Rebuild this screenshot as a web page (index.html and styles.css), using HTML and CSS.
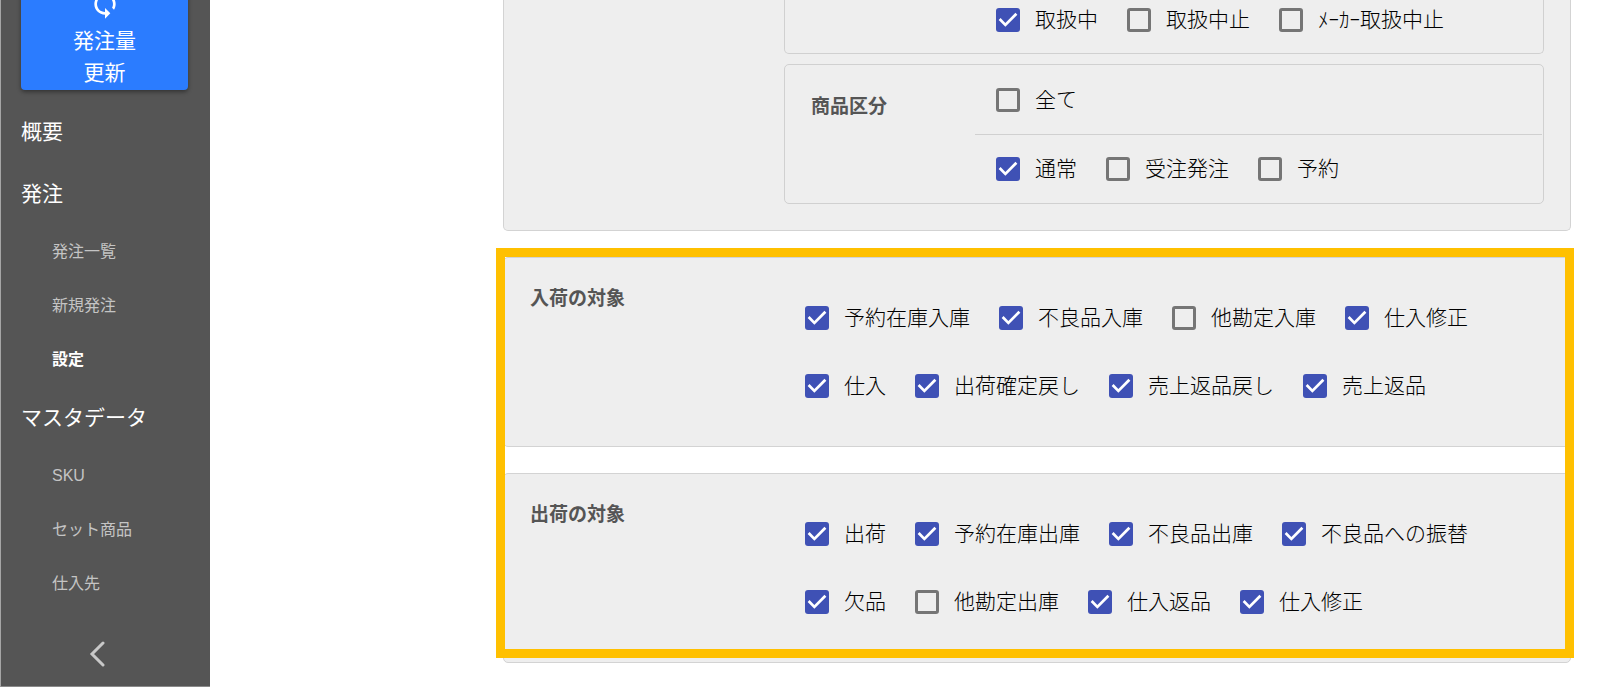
FILE: index.html
```html
<!DOCTYPE html>
<html lang="ja">
<head>
<meta charset="utf-8">
<meta name="viewport" content="width=device-width, initial-scale=1">
<title>発注設定</title>
<link rel="stylesheet" href="styles.css">
</head>
<body>
<div class="page">
  <aside class="sidebar">
    <button class="update" type="button">
      <svg class="update-icon" viewBox="0 0 24 24" aria-hidden="true"><path d="M12 4V1L8 5l4 4V6c3.31 0 6 2.69 6 6 0 1.01-.25 1.97-.7 2.8l1.46 1.46C19.54 15.03 20 13.57 20 12c0-4.42-3.58-8-8-8zm0 14c-3.31 0-6-2.69-6-6 0-1.01.25-1.97.7-2.8L5.24 7.74C4.46 8.97 4 10.43 4 12c0 4.42 3.58 8 8 8v3l4-4-4-4v3z"/></svg>
      <span>発注量</span>
      <span>更新</span>
    </button>
    <nav class="nav">
      <a class="nav-main" href="#">概要</a>
      <a class="nav-main" href="#">発注</a>
      <a class="nav-sub" href="#">発注一覧</a>
      <a class="nav-sub" href="#">新規発注</a>
      <a class="nav-sub nav-current" href="#" aria-current="page">設定</a>
      <a class="nav-main" href="#">マスタデータ</a>
      <a class="nav-sub" href="#">SKU</a>
      <a class="nav-sub" href="#">セット商品</a>
      <a class="nav-sub" href="#">仕入先</a>
    </nav>
    <button class="collapse" type="button" aria-label="メニューを閉じる">
      <svg class="collapse-icon" viewBox="0 0 16 26" aria-hidden="true"><path d="M14 2 3 13l11 11"/></svg>
    </button>
  </aside>

  <main class="main">
    <section class="card card-first">
      <div class="filters">
        <fieldset class="filter filter-cut">
          <div class="filter-rows">
            <div class="options filter-row">
              <label class="option"><input type="checkbox" checked>取扱中</label>
              <label class="option"><input type="checkbox">取扱中止</label>
              <label class="option"><input type="checkbox">ﾒｰｶｰ取扱中止</label>
            </div>
          </div>
        </fieldset>
        <fieldset class="filter" aria-labelledby="kubun">
          <h3 class="label filter-label" id="kubun">商品区分</h3>
          <div class="filter-rows">
            <div class="options filter-row">
              <label class="option"><input type="checkbox">全て</label>
            </div>
            <div class="options filter-row">
              <label class="option"><input type="checkbox" checked>通常</label>
              <label class="option"><input type="checkbox">受注発注</label>
              <label class="option"><input type="checkbox">予約</label>
            </div>
          </div>
        </fieldset>
      </div>
    </section>

    <div class="marked">
      <section class="card target">
        <h3 class="label target-label">入荷の対象</h3>
        <div class="options target-options">
          <label class="option"><input type="checkbox" checked>予約在庫入庫</label>
          <label class="option"><input type="checkbox" checked>不良品入庫</label>
          <label class="option"><input type="checkbox">他勘定入庫</label>
          <label class="option"><input type="checkbox" checked>仕入修正</label>
          <label class="option"><input type="checkbox" checked>仕入</label>
          <label class="option"><input type="checkbox" checked>出荷確定戻し</label>
          <label class="option"><input type="checkbox" checked>売上返品戻し</label>
          <label class="option"><input type="checkbox" checked>売上返品</label>
        </div>
      </section>
      <section class="card target">
        <h3 class="label target-label">出荷の対象</h3>
        <div class="options target-options">
          <label class="option"><input type="checkbox" checked>出荷</label>
          <label class="option"><input type="checkbox" checked>予約在庫出庫</label>
          <label class="option"><input type="checkbox" checked>不良品出庫</label>
          <label class="option"><input type="checkbox" checked>不良品への振替</label>
          <label class="option"><input type="checkbox" checked>欠品</label>
          <label class="option"><input type="checkbox">他勘定出庫</label>
          <label class="option"><input type="checkbox" checked>仕入返品</label>
          <label class="option"><input type="checkbox" checked>仕入修正</label>
        </div>
      </section>
    </div>
  </main>
</div>
</body>
</html>
```

FILE: styles.css
```css
* {
  box-sizing: border-box;
}

body {
  margin: 0;
  background: #fff;
  color: #000;
  font-family: "Liberation Sans", "Noto Sans CJK JP", sans-serif;
  font-size: 21px;
}

.page {
  display: flex;
  min-height: 100vh;
  overflow: hidden;
}

/* Sidebar */
.sidebar {
  display: flex;
  flex-direction: column;
  flex: none;
  width: 210px;
  border-left: 1px solid #a6a6a6;
  border-bottom: 1px solid #8a8a8a;
  background: #555;
}

.update {
  display: flex;
  flex-direction: column;
  align-items: center;
  margin: -24px 22px 0 20px;
  padding: 12px 0 1px;
  border: 0;
  border-radius: 4px;
  background: #2b7cff;
  box-shadow: 0 2px 4px rgba(0, 0, 0, 0.4);
  color: #fff;
  font: inherit;
  line-height: 32px;
}

.update-icon {
  width: 32px;
  height: 32px;
  margin-bottom: 5px;
  fill: #fff;
}

.nav {
  display: flex;
  flex-direction: column;
  padding-top: 11px;
}

.nav a {
  color: #fff;
  text-decoration: none;
}

.nav .nav-main {
  padding-left: 20px;
  line-height: 62px;
}

.nav .nav-sub {
  padding-left: 51px;
  color: #c4c4c4;
  font-size: 16px;
  line-height: 54px;
}

.nav .nav-current {
  color: #fff;
  font-weight: 700;
}

.collapse {
  align-self: center;
  margin-top: 30px;
  margin-right: 18px;
  padding: 0;
  border: 0;
  background: none;
}

.collapse-icon {
  display: block;
  width: 16px;
  height: 26px;
  fill: none;
  stroke: #c8c8c8;
  stroke-width: 3;
  stroke-linecap: round;
}

/* Content */
.main {
  flex: 1;
  min-width: 0;
  padding: 0 53px 20px 293px;
}

.card {
  border: 1px solid #d3d3d3;
  border-radius: 5px;
  background: #eee;
}

.card-first {
  padding: 0 26px 26px 280px;
  border-top: 0;
  border-top-left-radius: 0;
  border-top-right-radius: 0;
}

.label {
  margin: 0;
  color: #555;
  font-size: 19px;
  font-weight: 700;
  line-height: 28px;
}

.filters {
  display: flex;
  flex-direction: column;
  gap: 10px;
}

.filter {
  display: flex;
  min-width: 0;
  margin: 0;
  padding: 0 1px 0 190px;
  border: 1px solid #d0d0d0;
  border-radius: 5px;
}

.filter-cut {
  margin-top: -15px;
  border-top: 0;
}

.filter-label {
  flex: none;
  width: 164px;
  margin-left: -164px;
  padding-top: 28px;
}

.filter-rows {
  flex: 1;
}

.filter-row {
  padding: 19px 21px 18px;
}

.filter-cut .filter-row {
  padding-bottom: 17px;
}

.options {
  display: flex;
  flex-wrap: wrap;
  gap: 36px 29px;
}

.filter-row + .filter-row {
  padding-top: 18px;
  border-top: 1px solid #d0d0d0;
}

.option {
  display: flex;
  align-items: center;
  gap: 15px;
  font-weight: 300;
  line-height: 32px;
}

.option input {
  appearance: none;
  flex: none;
  width: 24px;
  height: 24px;
  margin: 0;
  border: 3px solid #757575;
  border-radius: 3px;
}

.option input:checked {
  border: 0;
  background: #3f51b5;
}

.option input:checked::after {
  content: "";
  display: block;
  width: 24px;
  height: 24px;
  background: #fff;
  clip-path: polygon(11% 50%, 19% 42%, 39% 62%, 81% 20%, 89% 28%, 39% 78%);
}

.marked {
  position: relative;
  display: flex;
  flex-direction: column;
  gap: 26px;
  margin-top: 26px;
}

/* Highlight frame drawn over both cards */
.marked::after {
  content: "";
  position: absolute;
  inset: -9px -3px 5px -7px;
  border: 9px solid #ffc000;
  pointer-events: none;
}

.target {
  display: flex;
  padding: 0 26px;
}

.target-label {
  flex: none;
  width: 275px;
  padding-top: 27px;
}

.target-options {
  padding: 44px 0;
}
```
